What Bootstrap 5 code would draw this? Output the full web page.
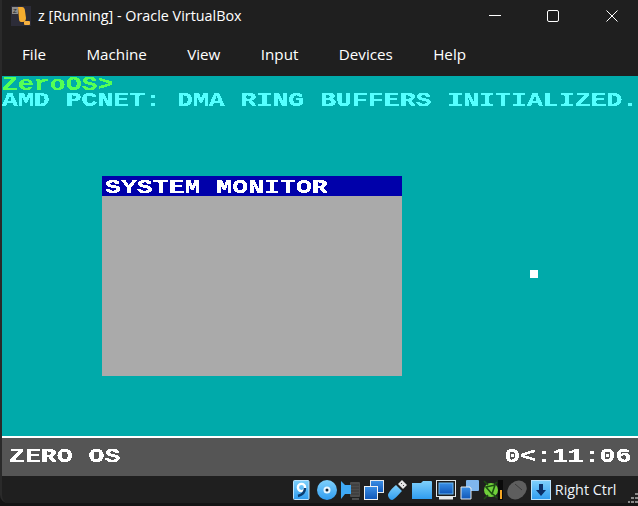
<!DOCTYPE html>
<html lang="en">
<head>
<meta charset="utf-8">
<title>z [Running] - Oracle VirtualBox</title>
<link href="https://cdn.jsdelivr.net/npm/bootstrap@5.3.0/dist/css/bootstrap.min.css" rel="stylesheet">
<style>
html,body{margin:0;height:506px;width:638px;overflow:hidden;background:#141414}
.vbwin{width:638px;height:503px;background:#1f1f1f;color:#fff;border-left:2px solid #2a2a2a;border-bottom-left-radius:8px;font-family:"Open Sans","Noto Sans",sans-serif;position:relative;overflow:hidden}
.deskedge{position:absolute;left:-2px;top:0;width:2px;height:34px;background:#a65a10}
.ttl{height:36px;padding-left:9px;padding-bottom:4px;font-size:14.35px;gap:3px}
.ttl-ico{width:20px;height:20px;flex:none}
.ttl-txt{margin-left:4px}
.winbtns{margin-left:auto;margin-right:-3px}
.winbtn{width:58.500px;height:32px;display:flex;align-items:center;justify-content:center}
.menubar{height:40px;padding-left:20px;gap:40.400px;font-size:15.2px;align-items:center;padding-bottom:4px}
.vmscreen{height:360px;padding-top:1px;background:#00aaaa;position:relative}
.vgaline{height:16px;line-height:16px;white-space:nowrap;font-family:"Liberation Mono",monospace;font-weight:700;font-size:20.5px;transform:scaleX(1.293);transform-origin:left center;filter:url(#crisp)}
.c-green{color:#55ff55}
.c-cyan{color:#55ffff}
.sysmon{position:absolute;left:100px;top:100px;width:300px;height:200px;background:#aaaaaa}
.sysmon-h{height:20px;background:#0000aa;color:#fff;padding-left:3px}
.sysmon-h .vgaline{height:20px;line-height:23px}
.cursorpt{position:absolute;left:528px;top:194px;width:8px;height:8px;background:#fff}
.vmline{height:2px;background:#fff}
.guestbar{height:38px;background:#555555;padding:0 7px 0 7px;justify-content:space-between;align-items:center}
.guestbar .vgaline{color:#fff}
.gb-r{transform-origin:right center}
.statusbar{height:27px;align-items:center;padding-left:291px;gap:3.8px;font-size:14.4px;position:relative}
.sico{width:20px;height:20px;flex:none}
.rctl{color:#eef4fa;white-space:nowrap}
.grip{position:absolute;right:0;bottom:0;width:10px;height:10px}
.fdefs{position:absolute;width:0;height:0}
</style>
</head>
<body>
<svg class="fdefs"><defs>
  <filter id="crisp" x="-5%" y="-10%" width="110%" height="120%" color-interpolation-filters="sRGB"><feComponentTransfer><feFuncA type="discrete" tableValues="0 1 1"/></feComponentTransfer></filter>
  <linearGradient id="blu" x1="0" y1="0" x2="0" y2="1"><stop offset="0" stop-color="#7fd0fb"/><stop offset="1" stop-color="#2f9cf0"/></linearGradient>
  <linearGradient id="dep" x1="0" y1="0" x2="0" y2="1"><stop offset="0" stop-color="#3b8fe6"/><stop offset="1" stop-color="#0f56b8"/></linearGradient>
</defs></svg>
<div class="vbwin">
  <div class="deskedge"></div>
  <div class="ttl d-flex align-items-center">
    <svg class="ttl-ico" viewBox="0 0 20 20"><rect width="20" height="20" fill="#2c2c38"/><rect x="1" y="1" width="6" height="7" fill="#8d8d8d"/><path d="M7 1h4c2 0 3 2 3 4l1 7c0 2-1 4-3 4h-2c-1 0-2-1-2-3z" fill="#f5ad2f"/><rect x="13" y="15" width="6" height="4" rx="1" fill="#f5b040"/><text x="2" y="7" font-size="6" fill="#222" font-family="Liberation Sans">Z</text></svg>
    <span class="ttl-txt">z [Running] - Oracle VirtualBox</span>
    <div class="winbtns d-flex">
      <div class="winbtn"><svg width="12" height="12" viewBox="0 0 12 12"><path d="M0 5.500h12" stroke="#fff" stroke-width="1"/></svg></div>
      <div class="winbtn"><svg width="12" height="12" viewBox="0 0 12 12"><rect x=".5" y=".5" width="11" height="11" rx="1.500" fill="none" stroke="#fff"/></svg></div>
      <div class="winbtn"><svg width="12" height="12" viewBox="0 0 12 12"><path d="M.5.5l11 11M11.500.5l-11 11" stroke="#fff" fill="none"/></svg></div>
    </div>
  </div>
  <div class="menubar d-flex">
    <span>File</span><span>Machine</span><span>View</span><span>Input</span><span>Devices</span><span>Help</span>
  </div>
  <div class="vmscreen">
    <div class="vgaline c-green">ZeroOS&gt;</div>
    <div class="vgaline c-cyan">AMD PCNET: DMA RING BUFFERS INITIALIZED.</div>
    <div class="sysmon">
      <div class="sysmon-h"><div class="vgaline">SYSTEM MONITOR</div></div>
    </div>
    <div class="cursorpt"></div>
  </div>
  <div class="vmline"></div>
  <div class="guestbar d-flex">
    <div class="vgaline">ZERO OS</div>
    <div class="vgaline gb-r">0&lt;:11:06</div>
  </div>
  <div class="statusbar d-flex">
    <svg class="sico" viewBox="0 0 20 20"><rect x=".5" y=".5" width="15.500" height="19" rx="1" fill="url(#blu)" stroke="#bfe2fb"/><circle cx="8.500" cy="7.500" r="3.600" fill="none" stroke="#fff" stroke-width="2.400"/><path d="M12 8c0 5-3 7-7 8" fill="none" stroke="#0b3c70" stroke-width="2.400"/></svg>
    <svg class="sico" viewBox="0 0 20 20"><circle cx="10" cy="10" r="10" fill="url(#blu)"/><circle cx="10" cy="10" r="3.500" fill="#eaf7ff"/><circle cx="10" cy="10" r="1.500" fill="#123"/></svg>
    <svg class="sico" viewBox="0 0 20 20"><rect x="9" y="2" width="10" height="15" rx="1" fill="#4c4c4c"/><path d="M10 5h8M10 8h8M10 11h8M10 14h8" stroke="#363636"/><path d="M11 19h7" stroke="#4c4c4c" stroke-width="2"/><path d="M0 1l4 4h6v9H4l-4 5z" fill="#3fa9f5"/></svg>
    <svg class="sico" viewBox="0 0 20 20"><rect x="6.500" y=".5" width="13" height="12" fill="url(#dep)" stroke="#e4e8ec"/><rect x=".5" y="6.500" width="13" height="13" fill="url(#dep)" stroke="#eef1f4"/></svg>
    <svg class="sico" viewBox="0 0 20 20"><path d="M0 15c0-2 5-8 8-10l6 6c-3 3-8 9-10 9s-4-3-4-5z" fill="url(#blu)"/><path d="M10 4l4-4 5 5-4 4z" fill="#e6e6e6"/><path d="M13 3h1v1h-1zM15 5h1v1h-1z" fill="#444"/></svg>
    <svg class="sico" viewBox="0 0 20 20"><path d="M0 3h9l2-2h8a1 1 0 0 1 1 1v17H0z" fill="url(#blu)"/></svg>
    <svg class="sico" viewBox="0 0 20 20"><rect x=".5" y=".5" width="19" height="16" fill="#1c1c1c" stroke="#dfe6ea"/><rect x="3" y="3" width="14" height="11" fill="url(#dep)" stroke="#6ab8f2"/><rect x="3" y="17" width="14" height="2.500" fill="#e8e8e8"/></svg>
    <svg class="sico" viewBox="0 0 20 20"><rect x="6" y="0" width="13" height="11" rx="1" fill="#7fb6ee"/><path d="M1 7h9v1h1v11H1z" fill="url(#dep)" stroke="#e8ecef"/></svg>
    <svg class="sico" viewBox="0 0 20 20"><rect x="15" y="0" width="5" height="20" fill="#0a0a0a"/><rect x="17" y="10" width="2" height="9" fill="#f5a623"/><ellipse cx="8" cy="10" rx="7" ry="7" fill="#6fd03a"/><path d="M3 7l9-2-3 9zM1 1l4 4M1 19l4-4M14 18l-4-4M14 2l-3 3" stroke="#1d4f12" stroke-width="1.600" fill="none"/></svg>
    <svg class="sico" viewBox="0 0 20 20"><ellipse cx="10" cy="10" rx="10.500" ry="8.500" transform="rotate(-40 10 10)" fill="#5e5e5e"/><path d="M8 4l7 6" stroke="#3b3b3b"/></svg>
    <svg class="sico" viewBox="0 0 20 20"><rect x=".5" y=".5" width="19" height="19" fill="url(#blu)" stroke="#bce3fb"/><path d="M8 4h4v6h3l-5 6-5-6h3z" fill="#0b2f66"/></svg>
    <span class="rctl">Right Ctrl</span>
    <svg class="grip" viewBox="0 0 10 10"><path fill="#8a8a8a" d="M7 0h3v2H7zM3 4h3v2H3zM7 4h3v2H7zM0 8h2v2H0zM3 8h3v2H3zM7 8h3v2H7z"/></svg>
  </div>
</div>
</body>
</html>
